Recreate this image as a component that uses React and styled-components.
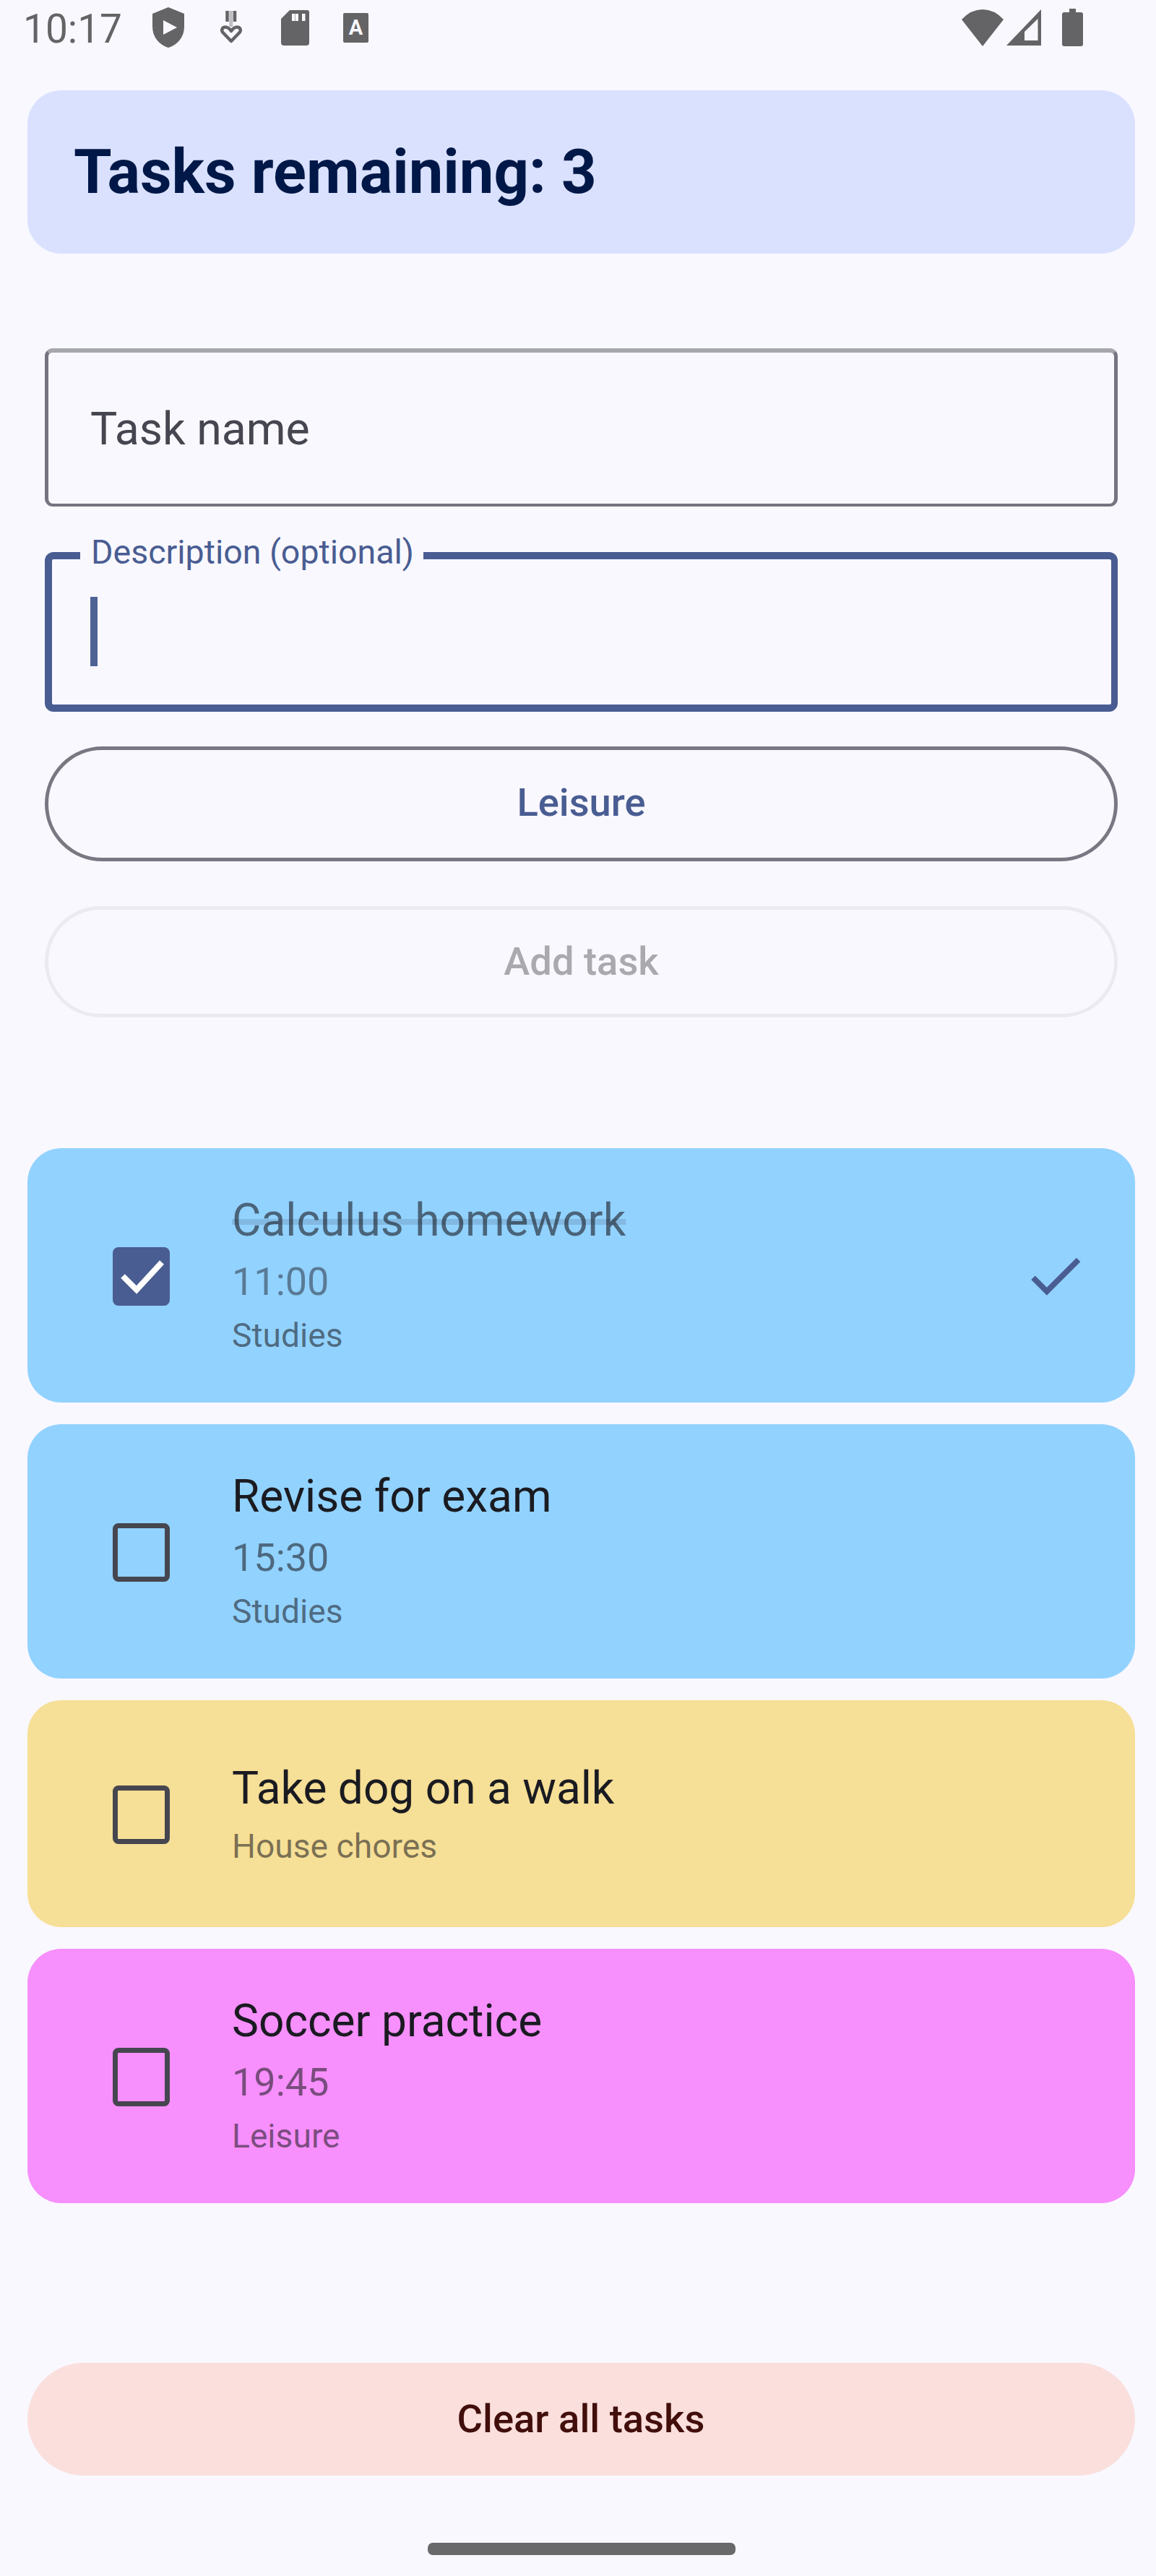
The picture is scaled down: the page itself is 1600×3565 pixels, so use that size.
import React from "react";
import styled, { createGlobalStyle } from "styled-components";

const Global = createGlobalStyle`
  * { box-sizing: border-box; }
  body {
    margin: 0;
    background: #f9f8ff;
    font-family: Roboto, "Noto Sans", sans-serif;
  }
`;

const Screen = styled.div`
  display: flex;
  flex-direction: column;
  width: 1600px;
  height: 3565px;
  overflow: hidden;
  background: #f9f8ff;
`;

const StatusBar = styled.header`
  display: flex;
  align-items: flex-start;
  justify-content: space-between;
  height: 125px;
  padding: 0 101px 0 32px;
  color: #646466;
`;

const StatusGroup = styled.div`
  display: flex;
  align-items: center;
  height: 76px;
`;

const Clock = styled.span`
  width: 179px;
  padding-top: 3px;
  font-size: 55px;
  line-height: 64px;
`;

const StatusIcon = styled.svg`
  display: block;
  flex: none;
  margin-left: ${(p) => p.$gap || 0}px;
`;

const LetterBadge = styled.span`
  display: flex;
  align-items: center;
  justify-content: center;
  width: 35px;
  height: 41px;
  margin-left: 47px;
  border-radius: 2px;
  background: #646466;
  color: #f9f8ff;
  font-size: 29px;
  font-weight: 700;
  line-height: 30px;
`;

const Summary = styled.section`
  display: flex;
  align-items: center;
  height: 226px;
  margin: 0 29px 0 38px;
  padding-left: 64px;
  border-radius: 47px;
  background: #dae1ff;
`;

const SummaryTitle = styled.h1`
  margin: 0;
  color: #001847;
  font-size: 85px;
  font-weight: 700;
  line-height: 109px;
`;

const Form = styled.form`
  display: flex;
  flex-direction: column;
  margin: 131px 53px 0 62px;
`;

const NameField = styled.div`
  display: flex;
  align-items: center;
  height: 219px;
  padding: 1px 0 0 58px;
  border: solid #75757f;
  border-width: 6px 5px 4px;
  border-top-color: #a6a6ad;
  border-radius: 11px;
`;

const Placeholder = styled.span`
  color: #45464f;
  font-size: 62.5px;
  line-height: 93px;
`;

const DescriptionField = styled.div`
  position: relative;
  display: flex;
  align-items: flex-start;
  height: 221px;
  margin-top: 63px;
  padding: 52px 0 0 53px;
  border: 10px solid #495d92;
  border-right-width: 9px;
  border-radius: 12px;
`;

const FloatingLabel = styled.label`
  position: absolute;
  top: -41px;
  left: 39px;
  width: 475px;
  padding-left: 15px;
  background: #f9f8ff;
  color: #495d92;
  font-size: 46.5px;
  line-height: 62px;
  white-space: nowrap;
`;

const Caret = styled.span`
  width: 10px;
  height: 96px;
  background: #4f6296;
`;

const OutlinedButton = styled.button`
  height: ${(p) => p.$height}px;
  margin: ${(p) => p.$top}px 0 0;
  padding: 0 0 ${(p) => p.$lift || 0}px;
  border: 5px solid ${(p) => (p.disabled ? "#eaeaef" : "#787882")};
  border-radius: 80px;
  background: transparent;
  color: ${(p) => (p.disabled ? "#a9a9ae" : "#495d92")};
  font-family: inherit;
  font-size: 54.3px;
  font-weight: 500;
  line-height: 78px;
`;

const TaskList = styled.ul`
  display: flex;
  flex-direction: column;
  gap: 30px;
  margin: 181px 29px 0 38px;
  padding: 0;
  list-style: none;
`;

const Task = styled.li`
  display: flex;
  align-items: center;
  height: ${(p) => p.$height}px;
  padding: 0 64px 0 118px;
  border-radius: 47px;
  background: ${(p) => p.$color};
`;

const Checkbox = styled.span`
  display: flex;
  flex: none;
  width: 79px;
  height: 81px;
  margin: 2px 86px 0 0;
  border: ${(p) => (p.$checked ? "0" : "7px solid #45464f")};
  border-radius: 8px;
  background: ${(p) => (p.$checked ? "#495d92" : "transparent")};
`;

const TaskText = styled.div`
  display: flex;
  flex: 1;
  flex-direction: column;
  padding-bottom: ${(p) => (p.$timed ? 10 : 6)}px;
`;

const TaskName = styled.span`
  align-self: flex-start;
  color: ${(p) => (p.$done ? "rgba(27, 27, 33, 0.6)" : "#1a1b21")};
  font-size: 62.2px;
  line-height: 93px;
  text-decoration: ${(p) => (p.$done ? "line-through 8px rgba(27, 27, 33, 0.13)" : "none")};
`;

const TaskTime = styled.span`
  color: rgba(27, 27, 33, ${(p) => (p.$done ? 0.48 : 0.58)});
  font-size: 54px;
  line-height: 77px;
`;

const TaskCategory = styled.span`
  margin-top: ${(p) => (p.$timed ? 5 : 3)}px;
  color: rgba(27, 27, 33, 0.58);
  font-size: 46.2px;
  line-height: 62px;
`;

const DoneIcon = styled.svg`
  display: block;
  flex: none;
`;

const ClearButton = styled.button`
  height: 156px;
  margin: 221px 29px 0 38px;
  padding: 0 1px 0 0;
  border: 0;
  border-radius: 78px;
  background: #fadfdc;
  color: #410e0b;
  font-family: inherit;
  font-size: 54.4px;
  font-weight: 500;
  line-height: 78px;
`;

const HomeHandle = styled.div`
  align-self: center;
  width: 426px;
  height: 17px;
  margin: 93px 0 0 10px;
  border-radius: 7px;
  background: #69696b;
`;

const tasks = [
  { name: "Calculus homework", time: "11:00", category: "Studies", color: "#92d2ff", height: 352, done: true },
  { name: "Revise for exam", time: "15:30", category: "Studies", color: "#92d2ff", height: 352 },
  { name: "Take dog on a walk", category: "House chores", color: "#f6df96", height: 314 },
  { name: "Soccer practice", time: "19:45", category: "Leisure", color: "#f78ffc", height: 352 },
];

function ShieldIcon() {
  return (
    <StatusIcon width="44" height="56" viewBox="0 0 44 56">
      <path fill="currentColor" d="M22 0 44 9V27C44 41 35 52 22 56 9 52 0 41 0 27V9Z" />
      <path fill="#f9f8ff" d="M15 18 34 28 15 38Z" />
    </StatusIcon>
  );
}

function HeartArrowIcon() {
  return (
    <StatusIcon $gap={48} width="34" height="46" viewBox="0 0 34 46">
      <path fill="none" stroke="currentColor" strokeWidth="4.5" d="M11.5 0V15M22 0V15" />
      <path fill="none" stroke="currentColor" strokeOpacity="0.4" strokeWidth="5" d="M16.8 0V22" />
      <path
        fill="none"
        stroke="currentColor"
        strokeWidth="4.5"
        strokeLinejoin="round"
        d="M17 42 5 29.500C3 26 5 22.500 9 22.500 13 22.500 15 25 17 28 19 25 21 22.500 25 22.500 29 22.500 31 26 29 29.500Z"
      />
    </StatusIcon>
  );
}

function SdCardIcon() {
  return (
    <StatusIcon $gap={52} width="39" height="49" viewBox="0 0 39 49">
      <path
        fill="currentColor"
        fillRule="evenodd"
        d="M12 0H36Q39 0 39 3V45Q39 49 35 49H4Q0 49 0 45V12ZM15 5V15H19.500V5ZM20 5V15H24V5ZM29 5V15H33.500V5Z"
      />
    </StatusIcon>
  );
}

function WifiIcon() {
  return (
    <StatusIcon width="58" height="51" viewBox="0 0 58 51">
      <path fill="currentColor" d="M0 14Q13 0 29 0T58 14L29 51Z" />
    </StatusIcon>
  );
}

function SignalIcon() {
  return (
    <StatusIcon $gap={4} width="48" height="50" viewBox="0 0 48 50">
      <path fill="currentColor" fillRule="evenodd" d="M48 0V50H0ZM43.500 13 25 31V43H43.500Z" />
    </StatusIcon>
  );
}

function BatteryIcon() {
  return (
    <StatusIcon $gap={29} width="29" height="52" viewBox="0 0 29 52">
      <path fill="currentColor" d="M10 0H19V5H26Q29 5 29 8V49Q29 52 26 52H3Q0 52 0 49V8Q0 5 3 5H10Z" />
    </StatusIcon>
  );
}

export default function App() {
  return (
    <Screen>
      <Global />
      <StatusBar>
        <StatusGroup>
          <Clock>10:17</Clock>
          <ShieldIcon />
          <HeartArrowIcon />
          <SdCardIcon />
          <LetterBadge>A</LetterBadge>
        </StatusGroup>
        <StatusGroup>
          <WifiIcon />
          <SignalIcon />
          <BatteryIcon />
        </StatusGroup>
      </StatusBar>

      <Summary>
        <SummaryTitle>Tasks remaining: 3</SummaryTitle>
      </Summary>

      <Form>
        <NameField>
          <Placeholder>Task name</Placeholder>
        </NameField>
        <DescriptionField>
          <FloatingLabel>Description (optional)</FloatingLabel>
          <Caret />
        </DescriptionField>
        <OutlinedButton type="button" $height={159} $top={48} $lift={4}>
          Leisure
        </OutlinedButton>
        <OutlinedButton type="button" $height={154} $top={62} disabled>
          Add task
        </OutlinedButton>
      </Form>

      <TaskList>
        {tasks.map((t) => (
          <Task key={t.name} $color={t.color} $height={t.height}>
            <Checkbox $checked={t.done}>
              {t.done && (
                <svg width="79" height="81" viewBox="0 0 79 81">
                  <path d="M14 40 33 59 68 21" fill="none" stroke="#fff" strokeWidth="8" />
                </svg>
              )}
            </Checkbox>
            <TaskText $timed={!!t.time}>
              <TaskName $done={t.done}>{t.name}</TaskName>
              {t.time && <TaskTime $done={t.done}>{t.time}</TaskTime>}
              <TaskCategory $timed={!!t.time}>{t.category}</TaskCategory>
            </TaskText>
            {t.done && (
              <DoneIcon width="93" height="93" viewBox="0 0 24 24">
                <path fill="#495d92" d="M9 16.170 4.830 12l-1.420 1.410L9 19 21 7l-1.410-1.410z" />
              </DoneIcon>
            )}
          </Task>
        ))}
      </TaskList>

      <ClearButton type="button">Clear all tasks</ClearButton>
      <HomeHandle />
    </Screen>
  );
}
